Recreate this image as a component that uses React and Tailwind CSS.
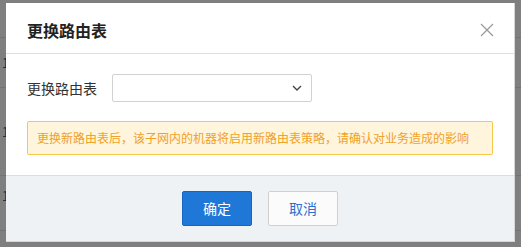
import React from 'react';

const font = { fontFamily: '"Microsoft YaHei", "Noto Sans CJK SC", "Liberation Sans", sans-serif' };

const App = () => {
    return (
        <div className="relative w-[521px] h-[247px] overflow-hidden bg-[#7f7f7f]" style={font}>
            {/* Faded table behind the overlay */}
            <div className="flex flex-col">
                <div className="h-[38px] border-b border-[#737373]" />
                <div className="h-[50px] border-b border-[#737373] text-[13px] leading-[50px] text-[#2a2040] pl-[2px]">1</div>
                <div className="h-[88px] border-b border-[#737373] text-[13px] leading-[88px] text-[#2a2040] pl-[2px]">1</div>
                <div className="h-[55px] border-b border-[#737373] text-[13px] leading-[40px] text-[#2a2040] pl-[2px]">1</div>
            </div>

            {/* Dialog */}
            <div className="absolute left-[6px] top-[3px] w-[509px] h-[239px] bg-white flex flex-col border-b border-r border-[#d6d6d6]">
                {/* Header */}
                <div className="h-[51px] flex items-center justify-between pl-[21px] pr-[20px] pt-[3px] border-b border-[#e0e0e0]">
                    <h2 className="text-[16px] font-bold text-[#222]">更换路由表</h2>
                    <svg width="14" height="14" viewBox="0 0 14 14" className="text-[#999]">
                        <path d="M1 1L13 13M13 1L1 13" stroke="currentColor" strokeWidth="1.2" fill="none" />
                    </svg>
                </div>

                {/* Body */}
                <div className="flex-1 px-[21px] pt-[20px]">
                    <div className="flex items-center">
                        <span className="w-[85px] text-[14px] text-[#333]">更换路由表</span>
                        <div className="w-[200px] h-[28px] border border-[#d2d2d2] rounded-[2px] flex items-center justify-end pr-[9px]">
                            <svg width="10" height="6" viewBox="0 0 10 6">
                                <path d="M1 1L5 5L9 1" stroke="#444" strokeWidth="1.4" fill="none" />
                            </svg>
                        </div>
                    </div>
                    <div className="mt-[19px] h-[34px] border border-[#f8c84a] bg-[#fff5dc] rounded-[2px] flex items-center pl-[9px] text-[12px] text-[#f0a128]">
                        更换新路由表后，该子网内的机器将启用新路由表策略，请确认对业务造成的影响
                    </div>
                </div>

                {/* Footer */}
                <div className="h-[66px] bg-[#eff2f5] border-t border-[#dcdcdc] flex items-center justify-center gap-[16px] pb-[1px]">
                    <button className="w-[70px] h-[35px] bg-[#1f78d8] border border-[#1565c0] rounded-[2px] text-white text-[14px]">确定</button>
                    <button className="w-[70px] h-[35px] bg-[#fbfbfb] border border-[#d0d0d0] rounded-[2px] text-[#2b6fd3] text-[14px]">取消</button>
                </div>
            </div>
        </div>
    );
};

export default App;
